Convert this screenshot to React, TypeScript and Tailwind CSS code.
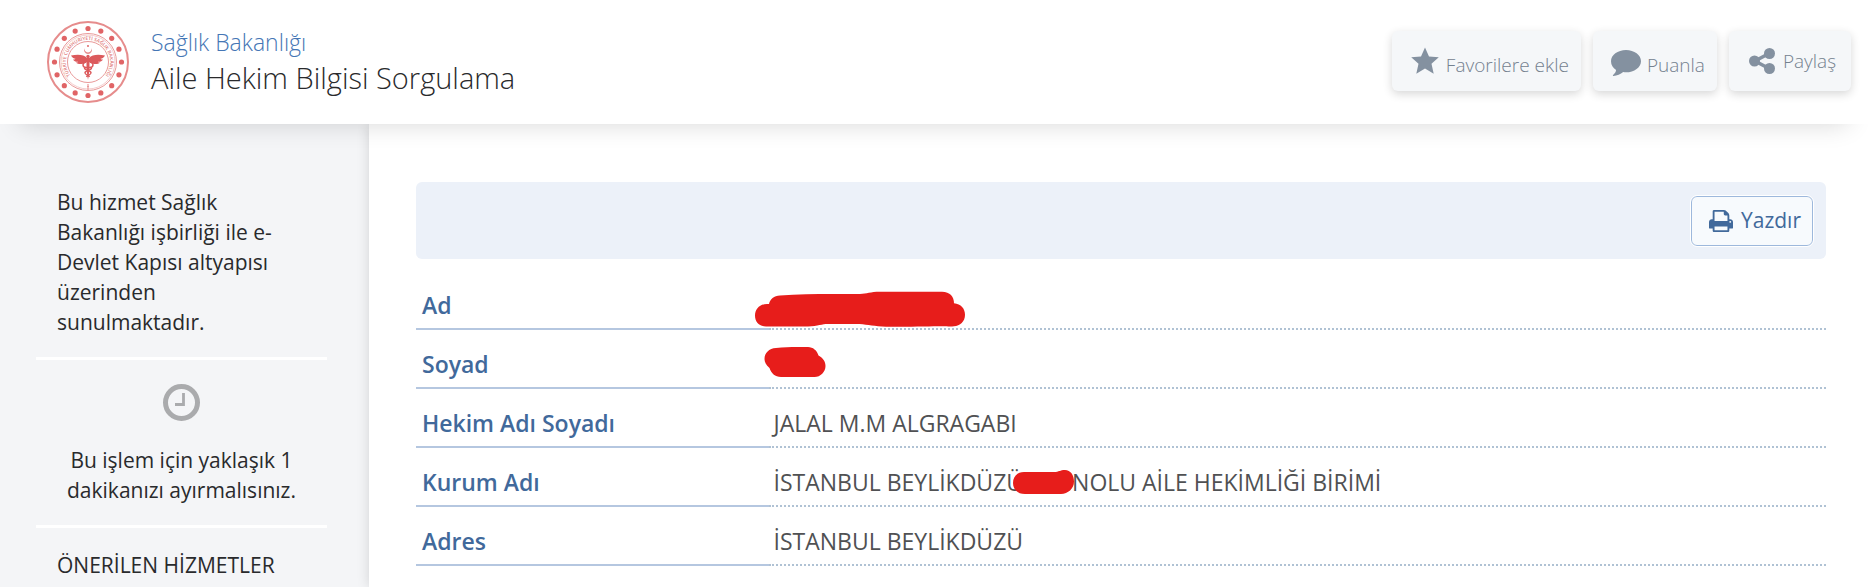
import React from "react";

const rows = [
  { label: "Ad", value: <NameMark /> },
  { label: "Soyad", value: <SurnameMark /> },
  { label: "Hekim Adı Soyadı", value: "JALAL M.M ALGRAGABI" },
  {
    label: "Kurum Adı",
    value: (
      <span className="flex items-center">
        İSTANBUL BEYLİKDÜZÜ
        <NumberMark />
        NOLU AİLE HEKİMLİĞİ BİRİMİ
      </span>
    ),
  },
  { label: "Adres", value: "İSTANBUL BEYLİKDÜZÜ" },
];

function NameMark() {
  return (
    <svg className="absolute -left-4 top-5 h-9 w-[213px]" viewBox="-1 0 213 36" fill="#e71d1b">
      <path d="M13 13h2c1-5 5-8 11-8.500 26-2 52-1.200 80-1.500 7 0 10-2.200 20-2.200h62c8 0 12 5 12 11.500 7 .5 11 5.500 11 11.500 0 7-5 11-11 11.500-4 .5-7 0-12 0-13 0-42 1-60 .2-11-.6-16-2.500-26-2.500H74c-6 0-10 2-20 2.500H12C5 35 1 31 1 24.500S6 13 13 13z" />
    </svg>
  );
}

function SurnameMark() {
  return (
    <svg className="absolute -left-1.5 top-4 h-8 w-[64px]" viewBox="0 0 64 32" fill="#e71d1b">
      <path d="M13 2c11-1.300 20-1 32-1 5 0 9 3.500 10.500 8.500 4.500 2.500 7 6 7 10.500 0 6-5 11-11 11H18c-6 0-10-4-11.500-9C3 19 1.500 16 1.500 13 1.500 7 6 2.500 13 2z" />
    </svg>
  );
}

function NumberMark() {
  return (
    <svg className="z-10 -ml-[11px] -mr-0.5 h-6 w-[62px] shrink-0" viewBox="0 0 62 24" fill="#e71d1b">
      <path d="M12 2h30c5 0 6-2 11-2 5.500 0 9 5 9 11.500C62 19 56 23.500 49 24H13C5 24 1 19 1 13S5 2 12 2z" />
    </svg>
  );
}

function MinistryLogo() {
  const dots = Array.from({ length: 16 }, (_, i) => (i * Math.PI) / 8);
  return (
    <svg className="size-[84px] shrink-0" viewBox="-42 -42 84 84" fill="none" stroke="#e99a9a">
      <circle r="40" strokeWidth="2" stroke="#e68c8c" />
      <circle r="28.500" strokeWidth="1" />
      <circle r="27" strokeWidth="0.500" />
      <circle r="20.500" strokeWidth="1" />
      {dots.map((a) => (
        <circle key={a} cx={33.5 * Math.sin(a)} cy={-33.5 * Math.cos(a)} r="2.600" fill="#e06466" stroke="none" />
      ))}
      <path id="ring" d="M-13 17.700A22 22 0 1 1 13 17.700" stroke="none" />
      <text fill="#e07a7a" stroke="none" fontSize="4.800" fontWeight="600">
        <textPath href="#ring" startOffset="50%" textAnchor="middle">
          TÜRKİYE CUMHURİYETİ SAĞLIK BAKANLIĞI
        </textPath>
      </text>
      <g fill="#dc5a5c" stroke="none">
        <path d="M-3.500-14a4 4 0 1 0 7 0 3.600 3.600 0 1 1-7 0z" fill="#e68c8c" />
        <circle cy="-16" r="0.900" />
        <path d="M-1-4c-3-3.500-9-4-16-2.500 1 2 2.500 3 4.500 3.200-.8.800-1.500.8-2.500.8 1 1.800 3 2.500 5 2.300-.5.600-1 .8-2 1 2.500 1.800 7 1.800 11-.8z" />
        <path d="M1-4c3-3.500 9-4 16-2.500-1 2-2.500 3-4.500 3.200.8.800 1.500.8 2.500.8-1 1.800-3 2.500-5 2.300.5.600 1 .8 2 1-2.500 1.800-7 1.800-11-.8z" />
        <circle cy="-5.500" r="1.700" />
        <path d="M-1.500-4h3v12L0 18l-1.500-10z" />
      </g>
      <path
        d="M-2 0c-4 1-4 5 0 5.500h4c4-.5 4-4.500 0-5.500M-3.500 6c0 3 7 2 6.500 5-.3 2-4 2-4.500 4M3.500 6c0 3-7 2-6.500 5 .3 2 4 2 4.500 4"
        stroke="#dc5a5c"
        strokeWidth="1.400"
      />
      <path d="M0 22v6M-1 24.500h2" strokeWidth="1.200" />
    </svg>
  );
}

const actionClass =
  "flex h-[60px] items-center rounded-md bg-[#f5f7f9] text-[19px] text-[#74818f] font-light shadow-[0_3px_10px_rgba(0,0,0,0.16)]";

export default function App() {
  return (
    <div className="min-h-screen flex flex-col bg-white font-['Open_Sans',sans-serif] text-[#292a2c]">
      {/* Header */}
      <header className="relative z-20 flex h-[124px] items-center justify-between bg-white pl-[46px] pr-[17px] shadow-[0_20px_24px_-20px_rgba(0,0,0,0.16)]">
        <div className="flex items-center gap-[21px]">
          <MinistryLogo />
          <div>
            <a href="#" className="block text-[23px] leading-8 font-light text-[#4576b5]">
              Sağlık Bakanlığı
            </a>
            <h1 className="text-[29px] leading-10 font-light">Aile Hekim Bilgisi Sorgulama</h1>
          </div>
        </div>
        <div className="flex gap-3 pb-[2px]">
          <button type="button" className={`${actionClass} gap-[7px] pl-[19px] pr-3`}>
            <svg className="h-7 w-7" viewBox="0 0 28 28" fill="#8491a0">
              <path d="M14 .5l4 9 9.800.8-7.300 6.500 2.200 10L14 21.600l-8.700 5.200 2.200-10L.2 10.300l9.800-.8z" />
            </svg>
            <span className="pt-2">Favorilere ekle</span>
          </button>
          <button type="button" className={`${actionClass} gap-[6px] pl-[18px] pr-3`}>
            <svg className="mt-1 h-[26px] w-[30px]" viewBox="0 0 30 26" fill="#8491a0">
              <path d="M15 0c8.300 0 15 5 15 11.200S23.300 22.300 15 22.300c-1 0-2 0-2.800-.2C9.500 24.500 6 25.600 2.500 26c-.6 0-.8-.6-.4-1 1.700-1.500 2.700-3 3-5C2 18 0 14.900 0 11.200 0 5 6.700 0 15 0z" />
            </svg>
            <span className="pt-2">Puanla</span>
          </button>
          <button type="button" className={`${actionClass} gap-2 pl-5 pr-[15px]`}>
            <svg className="h-[26px] w-[26px]" viewBox="0 0 26 26" fill="#8491a0">
              <path d="M20 5.500L6 13l14 7.500" fill="none" stroke="#8491a0" strokeWidth="3.500" />
              <circle cx="20.500" cy="5.500" r="5.500" />
              <circle cx="5.500" cy="13" r="5.500" />
              <circle cx="20.500" cy="20.500" r="5.500" />
            </svg>
            <span>Paylaş</span>
          </button>
        </div>
      </header>

      <div className="flex grow">
        {/* Sidebar */}
        <aside className="w-[369px] shrink-0 bg-[#f4f5f7] pl-9 pr-[42px] text-[21px] leading-[30px]">
          <p className="pl-[21px] pr-9 pt-[63px] pb-5">
            Bu hizmet Sağlık Bakanlığı işbirliği ile e-Devlet Kapısı altyapısı üzerinden sunulmaktadır.
          </p>
          <div className="border-y-3 border-white pt-6 pb-5 text-center">
            <svg className="mx-auto mb-6 size-[37px]" viewBox="0 0 37 37" fill="none" stroke="#aaabad">
              <circle cx="18.500" cy="18.500" r="16" strokeWidth="5" />
              <path d="M20.500 9v11.500h-8.500" strokeWidth="2.800" />
            </svg>
            <p>Bu işlem için yaklaşık 1 dakikanızı ayırmalısınız.</p>
          </div>
          <h2 className="pl-[21px] pt-[22px]">ÖNERİLEN HİZMETLER</h2>
        </aside>

        {/* Result */}
        <main className="relative grow bg-white pl-[47px] pr-[42px] pt-[58px] shadow-[0_0_12px_rgba(0,0,0,0.14)]">
          <div className="flex h-[77px] items-center justify-end rounded-md bg-[#ecf1f9] pr-[13px]">
            <button
              type="button"
              className="flex h-[50px] items-center gap-2 rounded-md border border-[#9db8dc] bg-[#f7fafd] pl-[17px] pr-[11px] text-[21px] text-[#41699b] outline outline-white"
            >
              <svg className="size-6" viewBox="64 64 1664 1664" fill="#41699b">
                <path d="M448 1536h896v-256h-896v256zm0-640h896v-384h-160q-40 0-68-28t-28-68v-160h-640v640zm1152 64q0-26-19-45t-45-19-45 19-19 45 19 45 45 19 45-19 19-45zm128 0v416q0 13-9.500 22.500t-22.500 9.500h-224v160q0 40-28 68t-68 28h-960q-40 0-68-28t-28-68v-160h-224q-13 0-22.500-9.500t-9.500-22.500v-416q0-79 56.500-135.500t135.500-56.500h64v-544q0-40 28-68t68-28h672q40 0 88 20t76 48l152 152q28 28 48 76t20 88v256h64q79 0 135.500 56.500t56.500 135.500z" />
              </svg>
              Yazdır
            </button>
          </div>
          <dl className="mt-3">
            {rows.map((row) => (
              <div key={row.label} className="flex h-[59px] text-[23px] leading-8">
                <dt className="w-1/4 border-b-2 border-[#b5c7e0] pl-[6px] pt-[18px] font-semibold text-[#41699b]">
                  {row.label}
                </dt>
                <dd className="relative w-3/4 border-b-2 border-dotted border-[#b0c2d4] pl-[5px] pt-[18px] text-[#505153]">
                  {row.value}
                </dd>
              </div>
            ))}
          </dl>
        </main>
      </div>
    </div>
  );
}
